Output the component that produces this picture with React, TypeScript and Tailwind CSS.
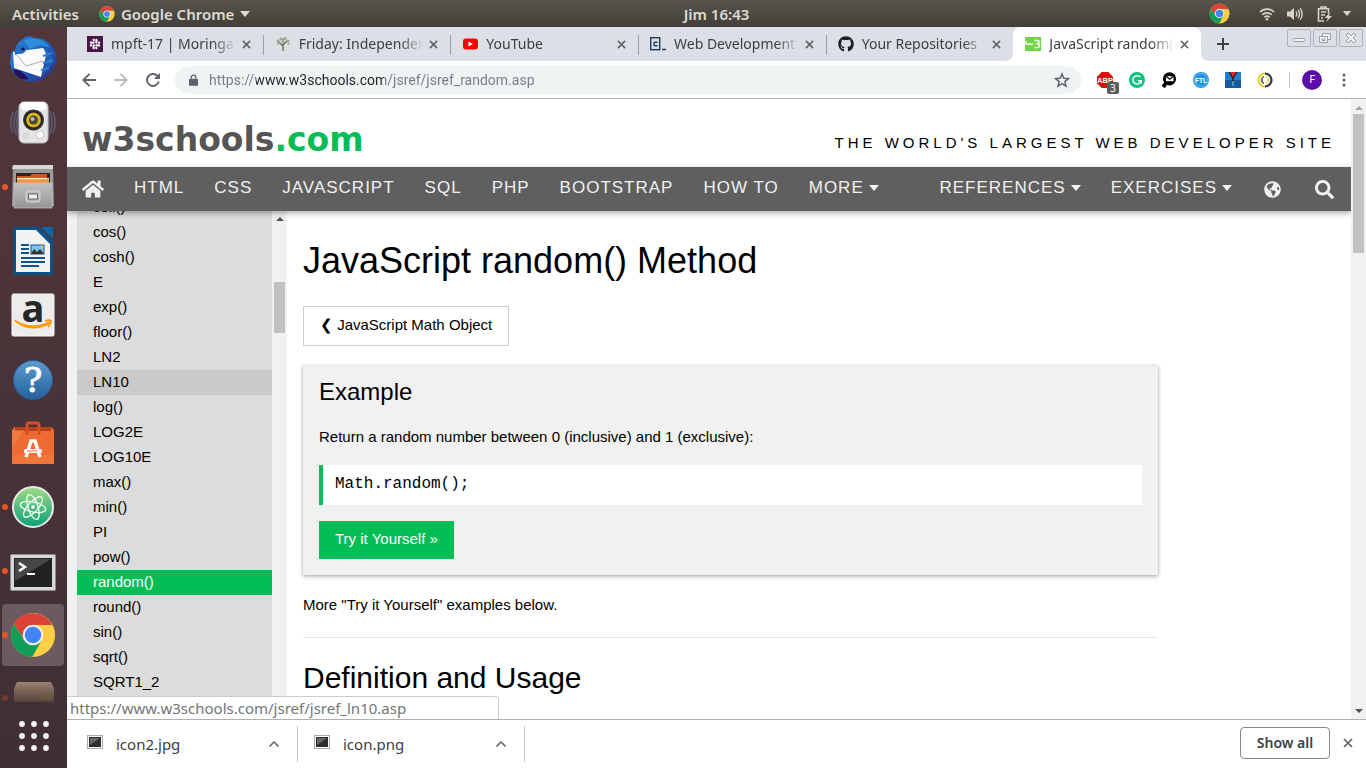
import React from "react";
import { FaHome, FaGlobeAmericas, FaSearch, FaSlack, FaGithub } from "react-icons/fa";

function ChromeLogo({ className }: { className: string }) {
  return (
    <svg viewBox="0 0 48 48" className={className} aria-hidden="true">
      <circle cx="24" cy="24" r="23" fill="#ffce44" />
      <path d="M24 24 4.1 12.5A23 23 0 0 1 43.9 13.5L24 13.5Z" fill="#db4437" />
      <path d="M24 13.5H44A23 23 0 0 0 4.1 12.5L14.8 29.2Z" fill="#db4437" />
      <path d="M4.1 12.5A23 23 0 0 0 23.2 47L33.2 29.3 24 34 14.9 29.3Z" fill="#0f9d58" />
      <circle cx="24" cy="24" r="10.8" fill="#f1f1f1" />
      <circle cx="24" cy="24" r="8.6" fill="#4285f4" />
    </svg>
  );
}

function ThunderbirdIcon() {
  return (
    <svg viewBox="0 0 48 48" className="size-12">
      <defs>
        <linearGradient id="tb" x1="0" y1="0" x2="1" y2="1">
          <stop offset="0" stopColor="#2b86d9" />
          <stop offset=".5" stopColor="#1d62bd" />
          <stop offset="1" stopColor="#2a2a86" />
        </linearGradient>
      </defs>
      <path d="M14 4c2-3 8-4 11-1 10-1 18 5 21 14 2 4 2 9 1 14l-3-1c1 4-1 8-4 10l-1-3c-1 5-5 8-9 10l-1-4-4 4C12 47 1 38 1 27c0-5 1-9 3-12l2 2c0-5 3-10 8-13Z" fill="url(#tb)" />
      <path d="M15 6c8-5 21-2 26 7-8-4-14-3-20 1Z" fill="#3aa0e8" opacity=".6" />
      <path d="M4 17 34 13 38 16 32 42 5 33Z" fill="#fbfbfb" />
      <path d="m8 20 9 11 17-5" fill="none" stroke="#aaa" strokeWidth="1" />
      <path d="M9 11c3-2 7-2 9 1l-2 5c-3 3-6 1-10 3-1-3 0-6 3-9Z" fill="#1f70c8" />
      <circle cx="14" cy="14" r="1.6" fill="#111" />
      <path d="M34 13c5 6 5 16-1 28l11-14c0-6-4-12-10-14Z" fill="#2160b8" />
      <path d="m34 21 9-3m-9 10 10-3m-12 10 8-2" stroke="#2f7fd0" strokeWidth="2" />
      <path d="m4 34 8 2 8 8C12 46 6 41 4 34Z" fill="#25105c" />
    </svg>
  );
}

function SpeakerIcon() {
  return (
    <svg viewBox="0 0 48 48" className="size-12">
      <g fill="none" stroke="#6b8fc8" strokeWidth="1.6" opacity=".4">
        <path d="M8 11C4 19 4 29 8 36M4 13c-3 7-3 14 0 21M11 9C7 19 7 30 11 38" />
        <path d="M40 11c4 8 4 18 0 25M44 13c3 7 3 14 0 21M37 9c4 10 4 21 0 29" />
      </g>
      <rect x="10" y="3" width="29" height="41" rx="5" fill="#e4e4e4" stroke="#bdbdbd" />
      <rect x="12" y="3" width="25" height="8" rx="3" fill="#fff" />
      <circle cx="24.500" cy="21" r="10.500" fill="#333" />
      <circle cx="24.500" cy="21" r="8.500" fill="#111" />
      <circle cx="24.500" cy="21" r="7.500" fill="#d8b41c" />
      <circle cx="24.500" cy="21" r="4.500" fill="#4b4738" />
      <circle cx="23.500" cy="20" r="2" fill="#bbb" />
      <circle cx="31" cy="36" r="4" fill="#fff" stroke="#aaa" strokeWidth=".7" />
      <rect x="15" y="35" width="4" height="4" fill="none" stroke="#c8c8c8" />
    </svg>
  );
}

function FilesIcon() {
  return (
    <svg viewBox="0 0 48 48" className="size-12">
      <defs>
        <linearGradient id="fl" x1="0" y1="0" x2="0" y2="1">
          <stop offset="0" stopColor="#c2c2c2" />
          <stop offset="1" stopColor="#949494" />
        </linearGradient>
      </defs>
      <path d="M4 3h40l1 40H3Z" fill="#9b9b9b" />
      <path d="M4 2h40v4H3Z" fill="#d6d6d6" />
      <rect x="7" y="10" width="34" height="12" fill="#2e2420" />
      <path d="M8 13h13l2-2h15v11H8Z" fill="#d8531e" />
      <path d="M8 15h32v1.500H8Z" fill="#fff2cf" />
      <path d="M8 17h32v5H8Z" fill="#ee9a3a" />
      <path d="M5 20h38v25H5Z" fill="url(#fl)" stroke="#bfbfbf" strokeWidth=".8" />
      <rect x="17" y="28" width="14" height="11" rx="2" fill="#b9b9b9" stroke="#d8d8d8" />
      <rect x="19.500" y="31" width="9" height="5" fill="#eee" stroke="#666" />
    </svg>
  );
}

function WriterIcon() {
  return (
    <svg viewBox="0 0 48 48" className="size-12">
      <path d="M6 0h24l14 14v32a2 2 0 0 1-2 2H6a2 2 0 0 1-2-2V2a2 2 0 0 1 2-2Z" fill="#0f4f85" />
      <path d="M32 0h10a2 2 0 0 1 2 2v10Z" fill="#0c67a7" />
      <path d="M7 3h20l14 14v28H7Z" fill="#f2f2f2" />
      <path d="M12 18h8M12 22h8M12 26h8M12 31h24M12 35h24M12 39h18" stroke="#11548b" strokeWidth="2" />
      <rect x="22" y="18" width="13" height="9" fill="#7cc3ee" stroke="#11548b" />
      <path d="m22 27 3-5 3 3 3-3 4 5Z" fill="#333" />
      <circle cx="33" cy="20" r="1.400" fill="#f5c53a" />
    </svg>
  );
}

function AmazonIcon() {
  return (
    <svg viewBox="0 0 48 48" className="size-12">
      <rect x="3" y="3" width="42" height="42" rx="1.500" fill="#ececec" stroke="#f8f8f8" />
      <text x="24" y="31" textAnchor="middle" className="font-['Open_Sans',sans-serif] font-bold" fontSize="38" fill="#262626">a</text>
      <path d="M6 30c10 9 25 9 35 2l-1-1c-10 5-23 6-34-2Z" fill="#f90" stroke="#f90" />
      <path d="M36 30c3-1 5-1 6 0 0 2-1 4-3 6" fill="none" stroke="#f90" strokeWidth="1.800" />
    </svg>
  );
}

function HelpIcon() {
  return (
    <svg viewBox="0 0 48 48" className="size-12">
      <defs>
        <linearGradient id="hp" x1="0" y1="0" x2="0" y2="1">
          <stop offset="0" stopColor="#5d9bd0" />
          <stop offset="1" stopColor="#24619d" />
        </linearGradient>
      </defs>
      <circle cx="24" cy="25" r="19.500" fill="url(#hp)" stroke="#2c5b8c" />
      <text x="24" y="37" textAnchor="middle" className="font-['DejaVu_Serif',serif]" fontSize="34" fill="#fff" stroke="#fff">?</text>
    </svg>
  );
}

function SoftwareIcon() {
  return (
    <svg viewBox="0 0 48 48" className="size-12">
      <path d="M5 8h38l2 5H3Z" fill="#b8401a" />
      <path d="M3 11 6 8v4h36V8l3 3v34H3Z" fill="#ee6c33" />
      <path d="M3 11h12L3 30Z" fill="#f4884e" opacity=".5" />
      <path d="M3 36h42v9H3Z" fill="#f47b3f" opacity=".6" />
      <path d="M18 16V6q0-2 2-2h8q2 0 2 2v10" fill="none" stroke="#d9501f" strokeWidth="3" />
      <path d="m17 38 5-16h4l5 16" fill="none" stroke="#fff" strokeWidth="3.400" />
      <rect x="15" y="30" width="18" height="4" rx="1.500" fill="#fff" />
      <path d="M18 32h10" stroke="#ee6c33" />
    </svg>
  );
}

function AtomIcon() {
  return (
    <svg viewBox="0 0 48 48" className="size-12">
      <defs>
        <linearGradient id="at" x1="0" y1="0" x2="0" y2="1">
          <stop offset="0" stopColor="#9fdc86" />
          <stop offset="1" stopColor="#0ba079" />
        </linearGradient>
      </defs>
      <circle cx="24" cy="24" r="20" fill="url(#at)" stroke="#e9e9e9" strokeWidth="2" />
      <g fill="none" stroke="#f2fff4" strokeWidth="1.300">
        <ellipse cx="24" cy="24" rx="13" ry="5" transform="rotate(12 24 24)" />
        <ellipse cx="24" cy="24" rx="13" ry="5" transform="rotate(72 24 24)" />
        <ellipse cx="24" cy="24" rx="13" ry="5" transform="rotate(-48 24 24)" />
      </g>
      <circle cx="24" cy="24" r="1.800" fill="#fff" />
    </svg>
  );
}

function TerminalIcon() {
  return (
    <svg viewBox="0 0 48 48" className="size-12">
      <rect x="1.500" y="7.500" width="45" height="36" rx="1" fill="#d8d8d8" stroke="#8e8e8e" />
      <rect x="5" y="11" width="38" height="29" fill="#222" />
      <path d="M6 12h36L6 34Z" fill="#474747" />
      <path d="m10 16 6 4-6 4" fill="none" stroke="#fff" strokeWidth="2.500" />
      <path d="M18 27h8" stroke="#fff" strokeWidth="2" />
    </svg>
  );
}

function BoxIcon() {
  return (
    <svg viewBox="0 0 48 24" className="mt-3 h-6 w-12 opacity-80">
      <defs>
        <linearGradient id="bx" x1="0" y1="0" x2="0" y2="1">
          <stop offset="0" stopColor="#b49a82" />
          <stop offset=".4" stopColor="#8a735f" />
          <stop offset="1" stopColor="#5c4843" />
        </linearGradient>
      </defs>
      <path d="M7 3h34l3 6v14H4V9Z" fill="url(#bx)" />
      <path d="M30 16h12v5H30Z" fill="#697033" opacity=".6" />
    </svg>
  );
}

const dockApps = [
  { name: "Thunderbird Mail", icon: <ThunderbirdIcon />, running: false, active: false },
  { name: "Rhythmbox", icon: <SpeakerIcon />, running: false, active: false },
  { name: "Files", icon: <FilesIcon />, running: true, active: false },
  { name: "LibreOffice Writer", icon: <WriterIcon />, running: false, active: false },
  { name: "Amazon", icon: <AmazonIcon />, running: false, active: false },
  { name: "Help", icon: <HelpIcon />, running: false, active: false },
  { name: "Ubuntu Software", icon: <SoftwareIcon />, running: false, active: false },
  { name: "Atom", icon: <AtomIcon />, running: true, active: false },
  { name: "Terminal", icon: <TerminalIcon />, running: true, active: false },
  { name: "Google Chrome", icon: <ChromeLogo className="size-[46px]" />, running: true, active: true },
];

function Dock() {
  return (
    <aside className="flex w-[67px] shrink-0 flex-col bg-linear-to-b from-[#52373a] to-[#402f36]">
      {dockApps.map((app) => (
        <button
          key={app.name}
          aria-label={app.name}
          className={
            app.active
              ? "relative mx-[2px] my-px flex h-[62px] w-[62px] shrink-0 items-center justify-center rounded bg-[#6b5a60]"
              : "relative mx-[2px] my-px flex h-[62px] w-[62px] shrink-0 items-center justify-center"
          }
        >
          {app.running && <span className="absolute top-7 left-0 size-[6px] rounded-full bg-[#e95420]" />}
          {app.icon}
        </button>
      ))}
      <button aria-label="Archive" className="relative flex min-h-0 flex-1 items-start justify-center overflow-hidden">
        <span className="absolute top-7 left-[2px] size-[6px] rounded-full bg-[#7a3a30]" />
        <BoxIcon />
      </button>
      <button aria-label="Show applications" className="flex h-16 shrink-0 items-center justify-center">
        <svg viewBox="0 0 30 30" className="size-[30px]" fill="#f2f2f2">
          {[3, 15, 27].map((y) => [3, 15, 27].map((x) => <circle key={`${x}-${y}`} cx={x} cy={y} r="2.900" />))}
        </svg>
      </button>
    </aside>
  );
}

function SystemBar() {
  return (
    <header className="relative flex h-[27px] shrink-0 items-center justify-between bg-linear-to-b from-[#58554c] to-[#403e38] px-3 text-[15px] leading-5 font-semibold text-[#dfdbd2]">
      <div className="flex items-center gap-5">
        <button>Activities</button>
        <button className="flex items-center gap-[6px]">
          <ChromeLogo className="size-4" />
          Google Chrome
          <svg viewBox="0 0 10 6" className="h-[6px] w-[10px]" fill="currentColor"><path d="M0 0h10L5 6Z" /></svg>
        </button>
      </div>
      <button className="absolute right-0 left-[67px] mx-auto w-fit">Jim 16:43</button>
      <div className="flex items-center text-[#d8d4cc]">
        <ChromeLogo className="mr-[29px] size-[21px]" />
        <svg viewBox="0 0 16 14" className="mr-3 h-[14px] w-4" fill="none" stroke="currentColor" strokeWidth="1.700">
          <path d="M1 5a10 10 0 0 1 14 0M3.300 7.700a6.800 6.800 0 0 1 9.400 0M5.500 10.300a3.600 3.600 0 0 1 5 0" />
          <circle cx="8" cy="12.300" r="1.200" fill="currentColor" stroke="none" />
        </svg>
        <svg viewBox="0 0 16 14" className="mr-[14px] h-[14px] w-4" fill="none" stroke="currentColor" strokeWidth="1.400">
          <path d="M0 4.500h3L7 1v12L3 9.500H0Z" fill="currentColor" stroke="none" />
          <path d="M9 4.500q1.500 2.500 0 5M11 2.800q3 4.200 0 8.400M13.200 1.300q4 5.700 0 11.400" />
        </svg>
        <svg viewBox="0 0 15 16" className="mr-[10px] h-4 w-[15px]" fill="none" stroke="currentColor" strokeWidth="1.600">
          <path d="M4 2.500V1h5v1.500M7 15H1.500V2.700h10V7M4 6h5M4 9h4M4 12h2" />
          <path d="m12 7-4 5h3l-2 4 6-6h-3l1-3Z" fill="currentColor" stroke="none" />
        </svg>
        <svg viewBox="0 0 10 6" className="mr-[2px] h-[5px] w-[10px]" fill="currentColor"><path d="M0 0h10L5 6Z" /></svg>
      </div>
    </header>
  );
}

function Cross({ className }: { className: string }) {
  return (
    <svg viewBox="0 0 10 10" className={className} fill="none" stroke="currentColor" strokeWidth="1.700" aria-hidden="true">
      <path d="m1 1 8 8M9 1 1 9" />
    </svg>
  );
}

const tabs = [
  {
    title: "mpft-17 | Moringa School",
    icon: <span className="flex size-4 items-center justify-center bg-[#4a154b] text-white"><FaSlack size={12} /></span>,
  },
  {
    title: "Friday: Independent Project",
    icon: (
      <svg viewBox="0 0 16 16" className="size-4">
        <path d="M8 15V8M8 10 4 6m4 3 4-4M8 7V3" stroke="#6d6a4e" strokeWidth="1.300" fill="none" />
        <g fill="#9aa78a">
          <circle cx="3" cy="5" r="1.500" /><circle cx="6" cy="3" r="1.600" /><circle cx="10" cy="2.500" r="1.600" />
          <circle cx="13" cy="5" r="1.600" /><circle cx="8" cy="5" r="1.300" /><circle cx="3" cy="8" r="1" /><circle cx="13.500" cy="8" r="1" />
        </g>
      </svg>
    ),
  },
  {
    title: "YouTube",
    icon: (
      <svg viewBox="0 0 16 16" className="size-4">
        <rect x="1" y="2.500" width="15" height="11" rx="3" fill="#f00" />
        <path d="m6.500 5.500 4.500 2.500-4.500 2.500Z" fill="#fff" />
      </svg>
    ),
  },
  {
    title: "Web Development",
    icon: (
      <svg viewBox="0 0 16 16" className="size-4" fill="none" stroke="#1f3a56" strokeWidth="1.400">
        <rect x=".7" y="1.700" width="9" height="12" />
        <path d="M7.500 6.300H5q-1 0-1 1v1.400q0 1 1 1h2.500M12 13.500h4" />
      </svg>
    ),
  },
  { title: "Your Repositories", icon: <FaGithub size={16} color="#1b1f23" /> },
  {
    title: "JavaScript random() Method",
    icon: (
      <svg viewBox="0 0 16 16" className="size-4">
        <rect y="1" width="16" height="14" fill="#6fd644" />
        <path d="M1 5v2q0 1.500 1.500 1.500T4.500 7q0 1.500 1.500 1.500T8 7.500M9.500 4.500h3q1.500 0 1.500 1.500t-1.500 1.700h-1.500 1.500q2 0 2 1.900T12.500 11.500h-3" fill="none" stroke="#fff" strokeWidth="1.500" />
      </svg>
    ),
  },
];

function TabStrip() {
  return (
    <div className="flex h-[34px] shrink-0 items-stretch justify-between bg-[#dcdfe6] pl-2">
      <div role="tablist" className="flex w-[1126px] min-w-0">
        {tabs.map((tab, i) => {
          const active = i === tabs.length - 1;
          return (
            <div
              key={tab.title}
              role="tab"
              aria-selected={active}
              className={
                active
                  ? "relative flex min-w-0 flex-1 items-center rounded-t-lg bg-white px-3 text-[#3c4043]"
                  : "relative flex min-w-0 flex-1 items-center px-3 text-[#3c4043]"
              }
            >
              {active && (
                <>
                  <svg viewBox="0 0 8 8" className="absolute bottom-0 -left-2 size-2"><path d="M8 0v8H0q8 0 8-8" fill="#fff" /></svg>
                  <svg viewBox="0 0 8 8" className="absolute -right-2 bottom-0 size-2"><path d="M0 0v8h8Q0 8 0 0" fill="#fff" /></svg>
                </>
              )}
              <span className="shrink-0">{tab.icon}</span>
              <span className="ml-2 min-w-0 flex-1 overflow-hidden text-sm whitespace-nowrap [mask-image:linear-gradient(to_right,#000_82%,transparent)]">
                {tab.title}
              </span>
              <button aria-label={`Close ${tab.title}`} className="ml-[6px] shrink-0 text-[#5f6368]">
                <Cross className="size-[9px]" />
              </button>
              {i < 4 && <span className="absolute top-2 -right-px h-5 w-px bg-[#9aa0a6]" />}
            </div>
          );
        })}
      </div>
      <button aria-label="New tab" className="ml-4 text-[#3c4043]">
        <svg viewBox="0 0 12 12" className="size-3" stroke="currentColor" strokeWidth="2"><path d="M6 0v12M0 6h12" /></svg>
      </button>
      <div className="mt-[2px] mr-[3px] ml-auto flex h-[18px] gap-[2px] text-[#9a9da3]">
        {["Minimize", "Restore", "Close"].map((name) => (
          <button key={name} aria-label={name} className="flex w-6 items-center justify-center rounded-xs border border-[#b0b2b8]">
            <svg viewBox="0 0 12 12" className="size-3" fill="#f4f4f6" stroke="currentColor">
              {name === "Minimize" && <rect x=".5" y="6.500" width="11" height="3" rx="1" />}
              {name === "Restore" && <path d="M3.500 1.500h8v6h-3v3h-8v-6h3ZM3.500 4.500h5v3M3 7h3v1.500H3Z" />}
              {name === "Close" && <path d="m1 3 2-2 3 3 3-3 2 2-3 3 3 3-2 2-3-3-3 3-2-2 3-3Z" />}
            </svg>
          </button>
        ))}
      </div>
    </div>
  );
}

function Toolbar() {
  return (
    <div className="flex h-[38px] shrink-0 items-center border-b border-[#b4b4b4] bg-white pr-5 pl-[15px] text-[#5f6368]">
      <button aria-label="Back">
        <svg viewBox="0 0 14 14" className="size-[14px]" fill="none" stroke="currentColor" strokeWidth="1.900"><path d="M14 7H1.500M7.500.800 1.300 7l6.200 6.200" /></svg>
      </button>
      <button aria-label="Forward" className="ml-[18px] text-[#babcbe]">
        <svg viewBox="0 0 14 14" className="size-[14px]" fill="none" stroke="currentColor" strokeWidth="1.900"><path d="M0 7h12.500M6.500.800 12.700 7l-6.200 6.200" /></svg>
      </button>
      <button aria-label="Reload" className="ml-[18px]">
        <svg viewBox="0 0 14 14" className="size-[14px]" fill="none" stroke="currentColor" strokeWidth="1.900">
          <path d="M12.800 8.500A6 6 0 1 1 11.500 3" />
          <path d="M14 0v6H8Z" fill="currentColor" stroke="none" />
        </svg>
      </button>
      <div className="ml-[15px] flex h-7 min-w-0 flex-1 items-center rounded-full bg-[#eff3f4] pr-[11px] pl-[14px]">
        <svg viewBox="0 0 10 13" className="h-3 w-[9px] shrink-0">
          <rect y="5" width="10" height="8" rx="1" fill="#5f6368" />
          <path d="M2.500 5V3.500a2.500 2.500 0 0 1 5 0V5" fill="none" stroke="#5f6368" strokeWidth="1.400" />
        </svg>
        <input
          aria-label="Address and search bar"
          defaultValue="https://www.w3schools.com/jsref/jsref_random.asp"
          className="ml-[11px] min-w-0 flex-1 bg-[linear-gradient(to_right,#777b80_47px,#202124_47px,#202124_175px,#777b80_175px)] bg-clip-text font-['Roboto',sans-serif] text-sm text-transparent caret-black outline-none"
        />
        <button aria-label="Bookmark this page">
          <svg viewBox="0 0 16 16" className="size-4" fill="none" stroke="#5f6368" strokeWidth="1.500"><path d="m8 2 1.800 4.200 4.600.400-3.500 3 1.100 4.500L8 11.700l-4 2.400 1.100-4.500-3.500-3 4.600-.400Z" /></svg>
        </button>
      </div>
      <div className="ml-4 flex items-center gap-4">
        <button aria-label="AdBlock Plus" className="relative">
          <svg viewBox="0 0 16 16" className="size-4">
            <path d="M4.700 0h6.600L16 4.700v6.600L11.300 16H4.700L0 11.300V4.700Z" fill="#d70f0f" />
            <text x="8" y="11" textAnchor="middle" fontSize="7.500" className="font-['Liberation_Sans',sans-serif] font-bold" fill="#fff">ABP</text>
          </svg>
          <span className="absolute top-[10px] left-[10px] rounded-xs bg-[#5c5c5c] px-[3px] text-[10px] leading-3 text-white">3</span>
        </button>
        <button aria-label="Grammarly">
          <svg viewBox="0 0 16 16" className="size-4">
            <circle cx="8" cy="8" r="8" fill="#11c27c" />
            <path d="M11.200 5A4.200 4.200 0 1 0 12 9.500M9 8.700h3.200v2.800" fill="none" stroke="#fff" strokeWidth="1.500" />
          </svg>
        </button>
        <button aria-label="Mail tracker">
          <svg viewBox="0 0 16 16" className="size-4">
            <circle cx="8.500" cy="6.800" r="6.600" fill="#000" />
            <path d="m5 10-3.500 4.500M5 12l-2 3.500" stroke="#000" strokeWidth="2.400" />
            <rect x="5" y="4.200" width="7.500" height="5" fill="#fff" />
            <path d="m5 4.200 3.700 3 3.800-3" fill="none" stroke="#000" strokeWidth="1.200" />
          </svg>
        </button>
        <button aria-label="FTL">
          <svg viewBox="0 0 16 16" className="size-4">
            <circle cx="8" cy="8" r="8" fill="#1d96e0" />
            <circle cx="8" cy="8" r="6.500" fill="none" stroke="#7cc6f2" strokeWidth=".7" />
            <text x="8" y="10.500" textAnchor="middle" fontSize="6.500" className="font-['Liberation_Sans',sans-serif] font-bold" fill="#fff">FTL</text>
          </svg>
        </button>
        <button aria-label="Zip">
          <svg viewBox="0 0 16 16" className="size-4">
            <rect width="16" height="16" fill="#1f7fd0" />
            <path d="M0 8h16v8H0Z" fill="#165a9e" />
            <path d="M3.500 0h9L8.700 6.500V9H7.300V6.500Z" fill="#1c1c1c" />
            <path d="M4.800 0h6.400L8 5.500Z" fill="#e5231b" />
            <path d="M8 9v5" stroke="#8fc0ea" />
          </svg>
        </button>
        <button aria-label="Code ring">
          <svg viewBox="0 0 16 16" className="size-4" fill="none">
            <circle cx="8" cy="8" r="6.500" stroke="#f3d01f" strokeWidth="2.200" />
            <path d="M8 1.500a6.500 6.500 0 0 1 0 13" stroke="#2c3e66" strokeWidth="2.200" />
            <path d="M7 4.500Q4.500 6 4.500 8T7 11.500" stroke="#2c3e66" strokeWidth="1.400" />
            <path d="M9 4.500q2.500 1.500 2.500 3.500T9 11.500" stroke="#f3d01f" strokeWidth="1.400" />
          </svg>
        </button>
      </div>
      <span className="ml-4 h-4 w-px bg-[#c8cacd]" />
      <button aria-label="Profile" className="ml-3 flex size-5 items-center justify-center rounded-full bg-[#5b0ea8] text-[11px] text-white">F</button>
      <button aria-label="Chrome menu" className="ml-5">
        <svg viewBox="0 0 4 14" className="h-[14px] w-1" fill="currentColor"><circle cx="2" cy="2" r="1.500" /><circle cx="2" cy="7" r="1.500" /><circle cx="2" cy="12" r="1.500" /></svg>
      </button>
    </div>
  );
}

const topics = ["HTML", "CSS", "JAVASCRIPT", "SQL", "PHP", "BOOTSTRAP", "HOW TO"];

function MenuButton({ label }: { label: string }) {
  return (
    <button className="flex items-center gap-[5px] px-[15px] pb-[2px] tracking-[1px]">
      {label}
      <svg viewBox="0 0 10 6" className="h-[6px] w-[10px]" fill="currentColor"><path d="M0 0h10L5 6Z" /></svg>
    </button>
  );
}

function SiteHeader() {
  return (
    <div className="relative z-10 shrink-0 bg-white">
      <div className="flex h-[68px] items-end justify-between pr-4 pl-[15px]">
        <a href="#home" className="pb-[6px] font-['DejaVu_Sans',sans-serif] text-[33px] leading-[42px] font-bold text-[#555]">
          w3schools<span className="text-[#04bd55]">.com</span>
        </a>
        <p className="pb-[14px] text-[15px] leading-5 tracking-[4px] text-black">THE WORLD&#39;S LARGEST WEB DEVELOPER SITE</p>
      </div>
      <nav className="flex h-[44px] items-center bg-[#5f5f5f] text-[17px] leading-6 tracking-[1px] text-[#f1f1f1] shadow-[0_2px_6px_rgba(0,0,0,0.35)]">
        <a href="#home" aria-label="Home" className="px-[15px]"><FaHome size={22} /></a>
        {topics.map((t) => (
          <a key={t} href={`#${t}`} className="px-[15px] pb-[2px]">{t}</a>
        ))}
        <MenuButton label="MORE" />
        <span className="flex-1" />
        <MenuButton label="REFERENCES" />
        <MenuButton label="EXERCISES" />
        <button aria-label="Translate" className="px-[17px]"><FaGlobeAmericas size={17} /></button>
        <button aria-label="Search" className="px-[17px]"><FaSearch size={19} /></button>
      </nav>
    </div>
  );
}

const methods = [
  "ceil()", "cos()", "cosh()", "E", "exp()", "floor()", "LN2", "LN10", "log()", "LOG2E", "LOG10E",
  "max()", "min()", "PI", "pow()", "random()", "round()", "sin()", "sqrt()", "SQRT1_2",
];

function itemClass(name: string) {
  if (name === "random()") return "block bg-[#04bd55] pb-px pl-4 leading-6 text-white";
  if (name === "LN10") return "block bg-[#cacaca] pb-px pl-4 leading-6";
  return "block pb-px pl-4 leading-6";
}

function Sidebar() {
  return (
    <div className="flex shrink-0 overflow-hidden bg-[#f1f1f1] pl-[10px] text-[15px] text-black">
      <nav className="-mt-4 w-[195px] bg-[#dcdcdc]">
        {methods.map((m) => (
          <a key={m} href={`#${m}`} className={itemClass(m)}>{m}</a>
        ))}
      </nav>
      <div className="flex w-[15px] flex-col items-center">
        <svg viewBox="0 0 8 4" className="mt-[6px] h-1 w-2" fill="#505050"><path d="M4 0 8 4H0Z" /></svg>
        <div className="mt-[61px] h-[51px] w-[11px] bg-[#c1c1c1]" />
      </div>
    </div>
  );
}

function Article() {
  return (
    <main className="min-w-0 flex-1 px-4 pt-[25px] pr-[193px] text-[15px] leading-[22px] text-black">
      <h1 className="text-4xl leading-[50px]">JavaScript random() Method</h1>
      <a href="#math" className="mt-5 inline-block border border-[#ccc] px-4 pt-[7px] pb-[9px] leading-[22px]">
        ❮ JavaScript Math Object
      </a>
      <section className="mt-5 bg-[#f1f1f1] px-4 pb-4 shadow-[0_1px_4px_rgba(0,0,0,0.4)]">
        <h3 className="pt-2 text-2xl leading-9">Example</h3>
        <p className="mt-4">Return a random number between 0 (inclusive) and 1 (exclusive):</p>
        <pre className="mt-[17px] border-l-4 border-[#04bd55] bg-white px-3 pt-[7px] pb-[9px] font-['Liberation_Mono',monospace] text-base leading-6">Math.random();</pre>
        <a href="#try" className="mt-4 inline-block bg-[#04bd55] px-4 pt-[7px] pb-[9px] leading-[22px] text-white">Try it Yourself »</a>
      </section>
      <p className="mt-[19px]">More &quot;Try it Yourself&quot; examples below.</p>
      <hr className="mt-[21px] border-[#e6e6e6]" />
      <h2 className="mt-[17px] text-3xl leading-[45px]">Definition and Usage</h2>
    </main>
  );
}

function DownloadItem({ name }: { name: string }) {
  return (
    <div className="my-[6px] flex w-[227px] items-center border-r border-[#c4c6ca] pr-[18px] pl-4 text-[15px] text-[#3c4043]">
      <svg viewBox="0 0 16 14" className="mb-1 h-[14px] w-4">
        <rect x=".5" y=".5" width="15" height="13" fill="#fff" stroke="#aaa" />
        <rect x="2" y="2" width="12" height="10" fill="#2e2e2e" />
        <path d="M3 3h10L3 10Z" fill="#666" />
      </svg>
      <span className="ml-[13px]">{name}</span>
      <button aria-label={`Options for ${name}`} className="ml-auto">
        <svg viewBox="0 0 10 6" className="h-[6px] w-[10px]" fill="none" stroke="#6a6d72" strokeWidth="1.600"><path d="m.500 5.500 4.500-4.500 4.500 4.500" /></svg>
      </button>
    </div>
  );
}

export default function App() {
  return (
    <div className="flex h-screen flex-col overflow-hidden bg-white font-['Noto_Sans',sans-serif]">
      <SystemBar />
      <div className="flex min-h-0 flex-1">
        <Dock />
        <div className="flex min-w-0 flex-1 flex-col">
          <TabStrip />
          <Toolbar />
          <div className="relative flex min-h-0 flex-1">
            <div className="flex min-w-0 flex-1 flex-col overflow-hidden font-['Liberation_Sans',Arial,sans-serif]">
              <SiteHeader />
              <div className="flex min-h-0 flex-1">
                <Sidebar />
                <Article />
              </div>
            </div>
            <div className="flex w-[15px] shrink-0 flex-col items-center bg-[#f1f1f1]">
              <svg viewBox="0 0 8 4" className="mt-[7px] h-1 w-2" fill="#a3a3a3"><path d="M4 0 8 4H0Z" /></svg>
              <div className="mt-1 h-[139px] w-[11px] bg-[#c1c1c1]" />
              <svg viewBox="0 0 8 4" className="mt-auto mb-[6px] h-1 w-2" fill="#505050"><path d="M0 0h8L4 4Z" /></svg>
            </div>
            <div className="absolute bottom-0 left-0 z-20 h-[23px] w-[432px] rounded-tr border-t border-r border-[#ccc] bg-white pl-[3px] text-[15px] leading-[22px] text-[#717579]">
              https://www.w3schools.com/jsref/jsref_ln10.asp
            </div>
          </div>
          <footer className="flex h-[49px] shrink-0 border-t border-[#b0b0b0] bg-white pl-1">
            <DownloadItem name="icon2.jpg" />
            <DownloadItem name="icon.png" />
            <div className="mr-[13px] mb-[2px] ml-auto flex items-center gap-[13px] text-[#5f6368]">
              <button className="h-8 w-[90px] rounded border border-[#85888c] text-sm font-semibold text-[#3c4043]">Show all</button>
              <button aria-label="Close downloads bar"><Cross className="size-[10px]" /></button>
            </div>
          </footer>
        </div>
      </div>
    </div>
  );
}
